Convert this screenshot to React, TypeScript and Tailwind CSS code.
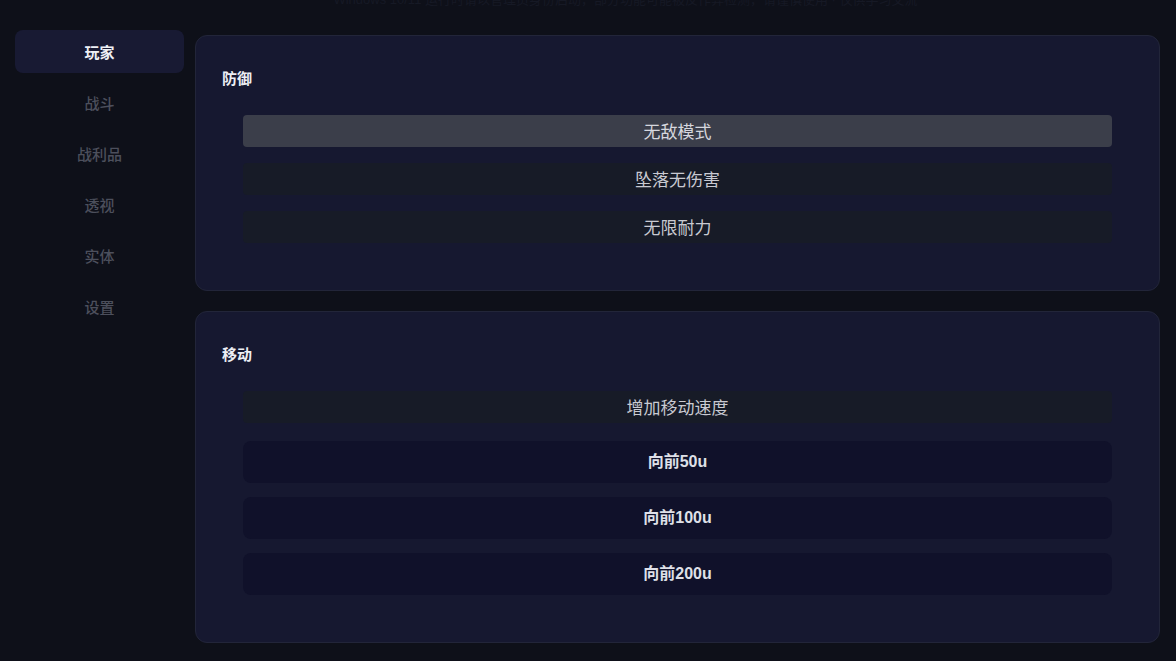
import { useState } from "react";

const NAV = ["玩家", "战斗", "战利品", "透视", "实体", "设置"];

type ToggleItem = { label: string; on: boolean };

function Toggle({ item, onClick }: { item: ToggleItem; onClick: () => void }) {
  return (
    <button
      type="button"
      onClick={onClick}
      className={
        item.on
          ? "flex h-[32px] w-full items-center justify-center rounded-[4px] bg-[#3b3e4a] pt-[3px] text-[17px] text-[#d6d7de]"
          : "flex h-[32px] w-full items-center justify-center rounded-[4px] bg-[#171b27] pt-[3px] text-[17px] text-[#c9cad2]"
      }
    >
      {item.label}
    </button>
  );
}

function Panel({ title, children }: { title: string; children: React.ReactNode }) {
  return (
    <section className="rounded-[12px] border border-[#222539] bg-[#161830] px-[26px] pt-[33px] pb-[47px]">
      <h3 className="text-[15px] font-bold leading-[20px] text-[#eceef4]">{title}</h3>
      <div className="mt-[26px] px-[21px]">{children}</div>
    </section>
  );
}

export default function App() {
  const [active, setActive] = useState(0);
  const [defense, setDefense] = useState<ToggleItem[]>([
    { label: "无敌模式", on: true },
    { label: "坠落无伤害", on: false },
    { label: "无限耐力", on: false }
  ]);
  const [speed, setSpeed] = useState(false);

  return (
    <div className="h-[661px] w-[1176px] overflow-hidden bg-[#0e1019] font-['Liberation_Sans','Noto_Sans_CJK_SC',sans-serif]">
      {/* 顶部滚出视口的说明文字 */}
      <div className="flex h-[30px] justify-center pl-[75px]">
        <p className="-mt-[9px] text-[13px] leading-[18px] text-[#161925]">
          Windows 10/11 运行时请以管理员身份启动，部分功能可能被反作弊检测，请谨慎使用 · 仅供学习交流
        </p>
      </div>

      <div className="flex px-[15px]">
        <nav className="flex w-[169px] flex-col">
          {NAV.map((n, i) => (
            <button
              key={n}
              type="button"
              onClick={() => setActive(i)}
              className={
                i === active
                  ? "flex h-[43px] items-center justify-center rounded-[8px] bg-[#181a33] pt-[3px] text-[15px] font-bold text-[#eef0f6]"
                  : "mt-[8px] flex h-[43px] items-center justify-center rounded-[8px] pt-[3px] text-[15px] font-medium text-[#4c4f5c]"
              }
            >
              {n}
            </button>
          ))}
        </nav>

        <main className="ml-[11px] mt-[5px] flex w-[965px] flex-col gap-[20px]">
          <Panel title="防御">
            <div className="flex flex-col gap-[16px]">
              {defense.map((d, i) => (
                <Toggle
                  key={d.label}
                  item={d}
                  onClick={() => setDefense(defense.map((x, j) => (j === i ? { ...x, on: !x.on } : x)))}
                />
              ))}
            </div>
          </Panel>

          <Panel title="移动">
            <Toggle item={{ label: "增加移动速度", on: speed }} onClick={() => setSpeed(!speed)} />
            <div className="mt-[18px] flex flex-col gap-[14px]">
              {["向前50u", "向前100u", "向前200u"].map((t) => (
                <button
                  key={t}
                  type="button"
                  className="flex h-[42px] items-center justify-center rounded-[8px] bg-[#10112a] text-[16px] font-bold text-[#dfe0e8]"
                >
                  {t}
                </button>
              ))}
            </div>
          </Panel>
        </main>
      </div>
    </div>
  );
}
